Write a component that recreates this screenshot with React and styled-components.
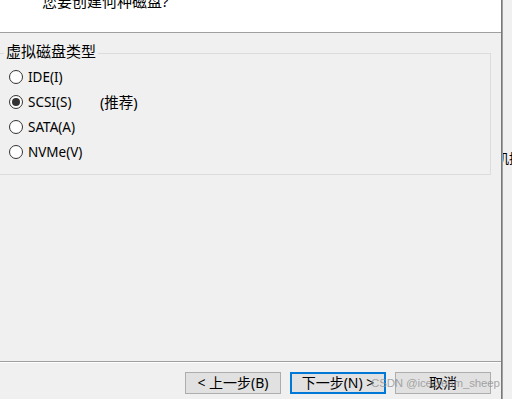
import styled, { createGlobalStyle } from 'styled-components';

const GlobalStyle = createGlobalStyle`
	html, body {
		margin: 0;
		padding: 0;
		background: #f0f0f0;
	}

	body {
		font-family: 'Noto Sans', 'Noto Sans CJK SC', sans-serif;
		color: #000;
	}
`;

const diskTypes = [
	{ id: 'ide', label: 'IDE(I)' },
	{ id: 'scsi', label: 'SCSI(S)', note: '(推荐)', checked: true },
	{ id: 'sata', label: 'SATA(A)' },
	{ id: 'nvme', label: 'NVMe(V)' },
];

const Page = styled.div`
	position: relative;
	display: flex;
	width: 512px;
	height: 399px;
	overflow: hidden;
	background: #f0f0f0;
`;

const Dialog = styled.div`
	display: flex;
	flex-direction: column;
	width: 501px;
	height: 100%;
	background: #f0f0f0;
`;

const Header = styled.div`
	height: 32px;
	flex-shrink: 0;
	background: #fff;
	border-bottom: 1px solid #a0a0a0;
	overflow: hidden;
`;

const Title = styled.div`
	margin: -7px 0 0 42px;
	font-size: 15px;
	line-height: 16px;
	white-space: nowrap;
`;

const Content = styled.div`
	flex: 1;
	padding-top: 10px;
`;

const GroupBox = styled.fieldset`
	margin: 0 10px 0 -4px;
	padding: 1px 7px 10px;
	border: 1px solid #dcdcdc;
	min-width: 0;
`;

const GroupTitle = styled.legend`
	padding: 0 2px 4px;
	font-size: 15px;
	line-height: 16px;
`;

const RadioRow = styled.label`
	display: flex;
	align-items: center;
	height: 25px;
	margin-left: 5px;
	font-size: 13.5px;
`;

const RadioCircle = styled.span`
	display: flex;
	align-items: center;
	justify-content: center;
	width: 14px;
	height: 14px;
	box-sizing: border-box;
	border: 1px solid #333;
	border-radius: 50%;
	background: #fff;
	margin-right: 5px;

	&::after {
		content: '';
		width: 8px;
		height: 8px;
		border-radius: 50%;
		background: ${({ $checked }) => ($checked ? '#333' : 'transparent')};
	}
`;

const RadioLabel = styled.span`
	width: 72px;
	white-space: nowrap;
`;

const Note = styled.span`
	font-size: 14.5px;
	white-space: nowrap;
`;

const Footer = styled.div`
	height: 38px;
	flex-shrink: 0;
	box-sizing: border-box;
	border-top: 1px solid #a0a0a0;
	box-shadow: inset 0 1px 0 #fdfdfd;
	padding: 10px 10px 0 0;
	display: flex;
	justify-content: flex-end;
	gap: 9px;
`;

const Button = styled.button`
	width: 96px;
	height: 22px;
	box-sizing: border-box;
	padding: 0;
	background: #e1e1e1;
	border: ${({ $primary }) => ($primary ? '2px solid #0078d7' : '1px solid #adadad')};
	font-family: inherit;
	font-size: 14px;
	line-height: 18px;
	color: #000;
	white-space: nowrap;
`;

const WindowEdge = styled.div`
	width: 2px;
	height: 100%;
	background: linear-gradient(to right, #646464, #b4b4b4);
`;

const Backdrop = styled.div`
	flex: 1;
	overflow: hidden;
	padding-top: 150px;
	background: #f0f0f0;
	font-size: 13px;
	line-height: 16px;
	white-space: nowrap;
`;

const BackdropText = styled.span`
	display: inline-block;
	margin-left: -7px;
`;

const Watermark = styled.div`
	position: absolute;
	left: 371px;
	top: 375px;
	font-family: 'Liberation Sans', sans-serif;
	font-size: 11.5px;
	letter-spacing: -0.15px;
	line-height: 16px;
	color: rgba(140, 140, 140, 0.75);
	white-space: nowrap;
	pointer-events: none;
`;

export default function App() {
	return (
		<>
			<GlobalStyle />
			<Page>
				<Dialog>
					<Header>
						<Title>您要创建何种磁盘?</Title>
					</Header>
					<Content>
						<GroupBox>
							<GroupTitle>虚拟磁盘类型</GroupTitle>
							{diskTypes.map((type) => (
								<RadioRow key={type.id}>
									<RadioCircle $checked={type.checked} />
									<RadioLabel>{type.label}</RadioLabel>
									{type.note && <Note>{type.note}</Note>}
								</RadioRow>
							))}
						</GroupBox>
					</Content>
					<Footer>
						<Button>&lt; 上一步(B)</Button>
						<Button $primary>下一步(N) &gt;</Button>
						<Button>取消</Button>
					</Footer>
				</Dialog>
				<WindowEdge />
				<Backdrop>
					<BackdropText>机持</BackdropText>
				</Backdrop>
				<Watermark>CSDN @icecream_sheep</Watermark>
			</Page>
		</>
	);
}
